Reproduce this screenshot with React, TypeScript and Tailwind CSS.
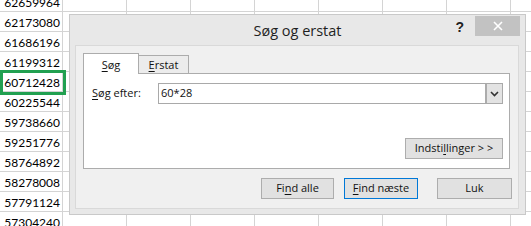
const numbers = [
  "62659964",
  "62173080",
  "61686196",
  "61199312",
  "60712428",
  "60225544",
  "59738660",
  "59251776",
  "58764892",
  "58278008",
  "57791124",
  "57304240",
];

const sheetFont = { fontFamily: "Lato, 'Liberation Sans', sans-serif" };
const uiFont = { fontFamily: "'Open Sans', 'Noto Sans', sans-serif" };

function Sheet() {
  return (
    <div className="-mt-[8px]" style={sheetFont}>
      {numbers.map((n) => (
        <div key={n} className="flex h-[20px] border-b border-[#d4d4d4]">
          <div className="flex w-[63px] shrink-0 items-center justify-end border-r border-[#d4d4d4] pr-[2px] pt-[3px] text-[12px] text-black">
            {n}
          </div>
          <div className="w-[64px] shrink-0 border-r border-[#d4d4d4]" />
          <div className="w-[64px] shrink-0 border-r border-[#d4d4d4]" />
          <div className="w-[64px] shrink-0 border-r border-[#d4d4d4]" />
          <div className="w-[64px] shrink-0 border-r border-[#d4d4d4]" />
          <div className="w-[64px] shrink-0 border-r border-[#d4d4d4]" />
          <div className="w-[64px] shrink-0 border-r border-[#d4d4d4]" />
          <div className="w-[64px] shrink-0 border-r border-[#d4d4d4]" />
          <div className="flex-1" />
        </div>
      ))}
    </div>
  );
}

function Btn({
  children,
  className = "",
}: {
  children: React.ReactNode;
  className?: string;
}) {
  return (
    <button
      type="button"
      className={`flex h-[21px] items-center justify-center border bg-[#e1e1e1] text-[11px] text-[#111] ${className}`}
    >
      {children}
    </button>
  );
}

function Dialog() {
  return (
    <div
      className="absolute left-[69px] top-[14px] flex h-[201px] w-[457px] flex-col border border-[#c9c9c9] bg-[#e8e8e8]"
      style={uiFont}
    >
      {/* title bar */}
      <div className="grid h-[30px] grid-cols-[1fr_auto_1fr]">
        <div />
        <div className="flex items-center pt-[1px] text-[14.5px] text-[#1f1f1f]">
          Søg og erstat
        </div>
        <div className="flex items-start justify-end gap-[11px] pr-[5px] pt-[1px]">
          <span
            className="mt-[3px] text-[14px] font-bold leading-[16px] text-[#222]"
            style={{ fontFamily: "'Liberation Sans', sans-serif" }}
          >
            ?
          </span>
          <div className="flex h-[20px] w-[45px] items-center justify-center bg-[#c2c2c2]">
            <svg width="10" height="10" viewBox="0 0 10 10">
              <path d="M1 1L9 9M9 1L1 9" stroke="#fff" strokeWidth="1.6" />
            </svg>
          </div>
        </div>
      </div>

      {/* content */}
      <div className="mb-[5px] ml-[5px] mr-[6px] flex flex-1 flex-col border border-[#d9d9d9] bg-[#f0f0f0] pl-[7px] pr-[6px] pt-[7px]">
        <div className="flex items-end">
          <div className="relative z-10 -mb-px flex h-[21px] w-[56px] items-center justify-center border-x border-t border-[#acacac] bg-white pt-[3px] text-[11px] text-[#111]">
            <span className="underline underline-offset-[2px]">S</span>øg
          </div>
          <div className="-ml-px flex h-[18px] w-[51px] items-center justify-center border-x border-t border-[#acacac] bg-[#ececec] pt-[1px] text-[11px] text-[#111]">
            <span className="underline underline-offset-[2px]">E</span>rstat
          </div>
        </div>

        <div className="mr-[2px] flex h-[96px] flex-col justify-between border border-[#acacac] bg-white pb-[9px] pl-[8px] pr-[6px] pt-[9px]">
          <div className="flex items-center">
            <div className="w-[66px] text-[11px] text-[#111]">
              <span className="underline underline-offset-[2px]">S</span>øg efter:
            </div>
            <div className="flex h-[21px] flex-1 border border-[#a9a9a9]">
              <div className="flex flex-1 items-center pl-[2px] text-[11px] text-[#111]">
                60*28
              </div>
              <div className="flex w-[17px] items-center justify-center border-l-2 border-[#acacac] bg-[#e3e3e3]">
                <svg width="9" height="6" viewBox="0 0 9 6">
                  <path d="M1 1L4.5 4.5L8 1" stroke="#333" strokeWidth="1.6" fill="none" />
                </svg>
              </div>
            </div>
          </div>
          <div className="flex justify-end">
            <Btn className="w-[98px] border-[#adadad]">
              Indsti<span className="underline underline-offset-[2px]">l</span>linger &gt; &gt;
            </Btn>
          </div>
        </div>

        <div className="mt-[9px] flex justify-end">
          <Btn className="w-[73px] border-[#adadad]">
            Fi<span className="underline underline-offset-[2px]">n</span>d alle
          </Btn>
          <Btn className="ml-[10px] w-[74px] border-[#0078d7]">
            <span className="underline underline-offset-[2px]">F</span>ind næste
          </Btn>
          <Btn className="ml-[19px] w-[75px] border-[#adadad]">Luk</Btn>
        </div>
      </div>
    </div>
  );
}

export default function App() {
  return (
    <div className="relative h-[226px] w-[531px] overflow-hidden bg-white">
      <Sheet />
      <div className="absolute left-0 top-[70px] h-[25px] w-[66px] border-[3px] border-[#21a050]" />
      <Dialog />
    </div>
  );
}
